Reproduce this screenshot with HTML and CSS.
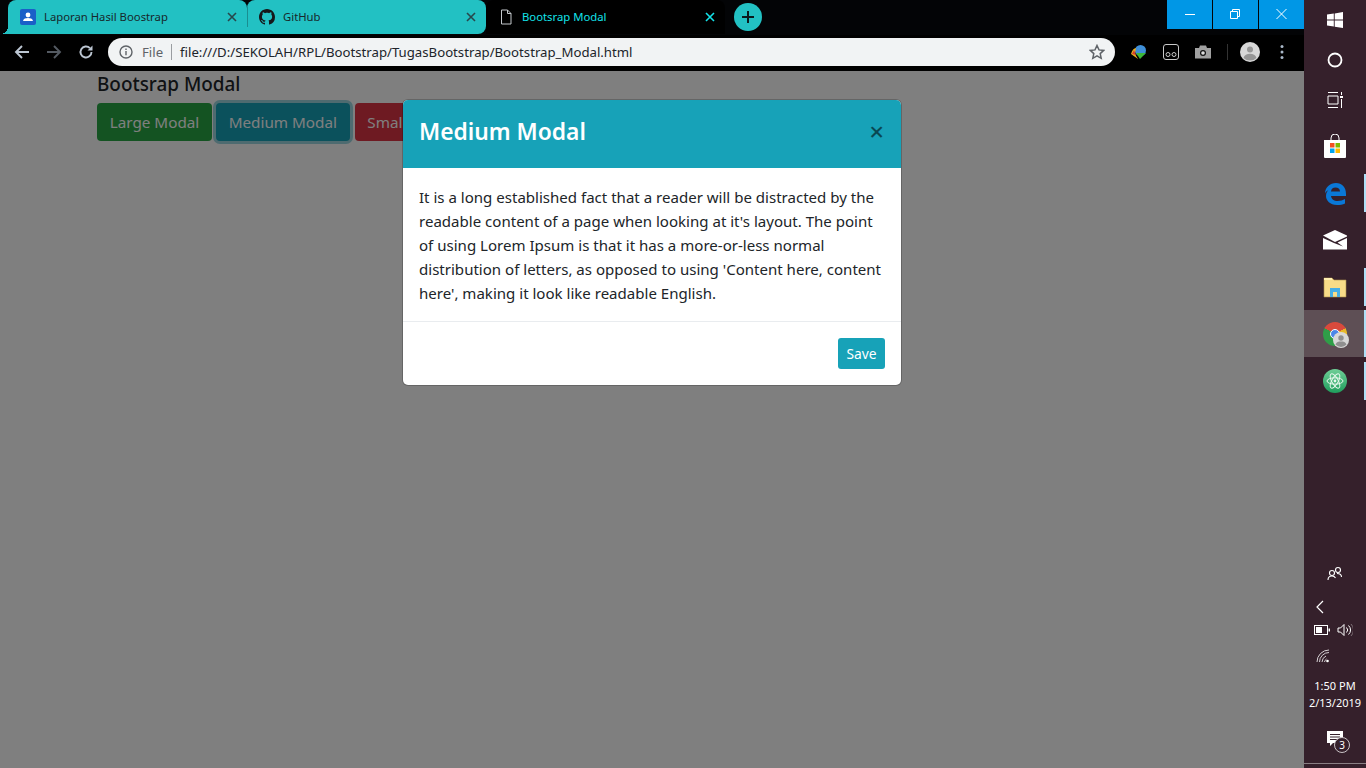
FILE: index.html
```html
<!DOCTYPE html>
<html lang="en">
<head>
  <meta charset="UTF-8">
  <meta name="viewport" content="width=device-width, initial-scale=1.0">
  <title>Bootsrap Modal</title>
  <link rel="stylesheet" href="styles.css">
</head>
<body>
  <div class="browser">
    <div class="tabstrip">
      <div class="tab">
        <svg class="favicon" viewBox="0 0 16 16"><rect width="16" height="16" rx="2" fill="#1a5fc8"/><circle cx="8" cy="6" r="2.4" fill="#fff"/><path d="M3 12c.5-2.4 2.6-3 5-3s4.500.6 5 3z" fill="#fff"/></svg>
        <span class="tab-title">Laporan Hasil Boostrap</span>
        <svg class="tab-close" viewBox="0 0 10 10"><path d="M1 1l8 8M9 1l-8 8"/></svg>
      </div>
      <div class="tab">
        <svg class="favicon" viewBox="0 0 16 16"><path fill="#16181a" d="M8 0C3.58 0 0 3.58 0 8c0 3.54 2.29 6.53 5.47 7.59.4.07.55-.17.55-.38 0-.19-.01-.82-.01-1.49-2.01.37-2.53-.49-2.69-.94-.09-.23-.48-.94-.82-1.13-.28-.15-.68-.52-.01-.53.63-.01 1.08.58 1.23.82.72 1.21 1.87.87 2.33.66.07-.52.28-.87.51-1.07-1.78-.2-3.64-.89-3.64-3.95 0-.87.31-1.59.82-2.15-.08-.2-.36-1.02.08-2.12 0 0 .67-.21 2.2.82.64-.18 1.32-.27 2-.27.68 0 1.36.09 2 .27 1.53-1.04 2.2-.82 2.2-.82.44 1.1.16 1.92.08 2.12.51.56.82 1.27.82 2.15 0 3.07-1.87 3.75-3.65 3.95.29.25.54.73.54 1.48 0 1.07-.01 1.93-.01 2.2 0 .21.15.46.55.38A8.013 8.013 0 0016 8c0-4.420-3.58-8-8-8z"/></svg>
        <span class="tab-title">GitHub</span>
        <svg class="tab-close" viewBox="0 0 10 10"><path d="M1 1l8 8M9 1l-8 8"/></svg>
      </div>
      <div class="tab tab-active">
        <svg class="favicon" viewBox="0 0 16 16"><path d="M3.500 1h6l3.500 3.500V15h-9.500zM9.500 1v3.500H13" fill="none" stroke="#c4c8cc" stroke-width="1"/></svg>
        <span class="tab-title">Bootsrap Modal</span>
        <svg class="tab-close" viewBox="0 0 10 10"><path d="M1 1l8 8M9 1l-8 8"/></svg>
      </div>
      <div class="new-tab">
        <svg viewBox="0 0 14 14"><path d="M7 1v12M1 7h12"/></svg>
      </div>
      <div class="window-controls">
        <div class="win-btn"><svg viewBox="0 0 12 12"><path d="M1 6.500h10"/></svg></div>
        <div class="win-btn"><svg viewBox="0 0 12 12"><path d="M.5 3.500h7v7h-7zM2.500 3.500v-2h7v7h-2"/></svg></div>
        <div class="win-btn"><svg viewBox="0 0 12 12"><path d="M.5 1l10 10M10.500 1l-10 10"/></svg></div>
      </div>
    </div>

    <div class="toolbar">
      <svg class="nav-icon" viewBox="0 0 16 16"><path d="M15 8H2M8 2L2 8l6 6"/></svg>
      <svg class="nav-icon nav-off" viewBox="0 0 16 16"><path d="M1 8h13M8 2l6 6-6 6"/></svg>
      <svg class="nav-icon" viewBox="0 0 16 16"><path d="M13.500 8a5.500 5.500 0 1 1-1.600-3.900"/><path class="nav-fill" d="M14.500 1.500v5h-5z"/></svg>
      <div class="omnibox">
        <svg class="info-icon" viewBox="0 0 14 14"><circle cx="7" cy="7" r="6" fill="none" stroke="#5f6368" stroke-width="1.400"/><path d="M6.300 6h1.400v4.200H6.300zM6.300 3.500h1.400v1.400H6.300z" fill="#5f6368"/></svg>
        <span class="scheme">File</span>
        <span class="url">file:///D:/SEKOLAH/RPL/Bootstrap/TugasBootstrap/Bootstrap_Modal.html</span>
        <svg class="star-icon" viewBox="0 0 16 16"><path d="M8 1.500l2 4.400 4.700.5-3.500 3.200 1 4.700L8 11.900l-4.200 2.400 1-4.700L1.300 6.400 6 5.900z"/></svg>
      </div>
      <div class="extensions">
        <svg class="ext-icon" viewBox="0 0 18 18"><circle cx="10.500" cy="7.500" r="5.500" fill="#3f8fd8"/><path d="M1 11c1-4 3-6 5-6l-1 6 3 5z" fill="#e8b020"/><path d="M2 11l2-4 2 5z" fill="#d8402c"/><path d="M6 10h10l-6 6z" fill="#3db83a"/></svg>
        <svg class="ext-icon" viewBox="0 0 18 18"><rect x="1.500" y="1.500" width="15" height="15" rx="2.500" fill="none" stroke="#c8c8c8"/><circle cx="6" cy="11.500" r="2" fill="none" stroke="#c8c8c8"/><circle cx="12" cy="11.500" r="2" fill="none" stroke="#c8c8c8"/></svg>
        <svg class="ext-icon" viewBox="0 0 18 18"><path d="M1 5h4l1-2.500h6L13 5h4v10.500H1z" fill="#a0a0a0"/><circle cx="9" cy="10" r="3" fill="#111"/><circle cx="9" cy="10" r="1.800" fill="#ddd"/></svg>
        <span class="ext-sep"></span>
        <svg class="avatar" viewBox="0 0 20 20"><circle cx="10" cy="10" r="10" fill="#d8d8d8"/><circle cx="10" cy="7.500" r="3" fill="#969696"/><path d="M3.500 16c.8-3 3.500-4.300 6.500-4.300s5.700 1.300 6.500 4.300a9.500 9.500 0 0 1-13 0z" fill="#969696"/></svg>
        <svg class="menu-dots" viewBox="0 0 4 16"><circle cx="2" cy="2.500" r="1.500"/><circle cx="2" cy="8" r="1.500"/><circle cx="2" cy="13.500" r="1.500"/></svg>
      </div>
    </div>

    <div class="page">
      <h5 class="page-title">Bootsrap Modal</h5>
      <div class="btn-row">
        <button class="btn btn-success">Large Modal</button>
        <button class="btn btn-info btn-focus">Medium Modal</button>
        <button class="btn btn-danger">Small Modal</button>
      </div>
      <div class="backdrop"></div>
      <div class="modal">
        <div class="modal-header">
          <h4 class="modal-title">Medium Modal</h4>
          <span class="modal-close">&times;</span>
        </div>
        <div class="modal-body">It is a long established fact that a reader will be distracted by the readable content of a page when looking at it's layout. The point of using Lorem Ipsum is that it has a more-or-less normal distribution of letters, as opposed to using 'Content here, content here', making it look like readable English.</div>
        <div class="modal-footer">
          <button class="btn-save">Save</button>
        </div>
      </div>
    </div>
  </div>

  <div class="taskbar">
    <div class="task-top">
      <svg class="sys-icon" viewBox="0 0 16 16"><path d="M0 2.500l6.800-1v6H0zM7.700 1.400L16 0v7.500H7.700zM0 8.400h6.800v6.100l-6.800-1zM7.700 8.400H16V16l-8.300-1.300z" fill="#fff"/></svg>
      <svg class="sys-icon" viewBox="0 0 16 16"><circle cx="8" cy="8" r="6.500" fill="none" stroke="#fff" stroke-width="1.800"/></svg>
      <svg class="sys-icon" viewBox="0 0 16 16"><path d="M1 .500h10M1 15.500h10M1 4h10v8H1zM14.500 0v3M14.500 7v9" fill="none" stroke="#fff"/><rect x="13" y="4" width="3" height="2" fill="#fff"/></svg>
    </div>
    <div class="task-apps">
      <div class="task-app">
        <svg class="app-icon" viewBox="0 0 24 24"><path d="M8 6V4a4 4 0 0 1 8 0v2" fill="none" stroke="#fff"/><path d="M1 6h22v17a1 1 0 0 1-1 1H2a1 1 0 0 1-1-1z" fill="#fff"/><rect x="7" y="9" width="4.500" height="4.500" fill="#f25022"/><rect x="12.500" y="9" width="4.500" height="4.500" fill="#7fba00"/><rect x="7" y="14.500" width="4.500" height="4.500" fill="#00a4ef"/><rect x="12.500" y="14.500" width="4.500" height="4.500" fill="#ffb900"/></svg>
      </div>
      <div class="task-app task-open">
        <svg class="app-icon" viewBox="0 0 24 24"><path d="M2 13C2 6 7 2 13 2c6 0 10 4 10 11v2H8c.3 3 3 5 6.500 5 3 0 5.500-.8 7.500-2v4.500c-2.200 1-5 1.500-8 1.500-7 0-11-4.500-11-9 0-3 1.200-5.500 4-7-1.800 1.500-4.500 2-5 5zM8 10.500h9c0-2.500-1.800-4-4.500-4S8.300 8 8 10.500z" fill="#0a78d7"/></svg>
      </div>
      <div class="task-app">
        <svg class="app-icon" viewBox="0 0 24 24"><path d="M0 7.500L12 2l12 5.500v1L12 14z" fill="#fff"/><path d="M0 10v11.500h24V10L14.500 14.500l5.500 4-9-3.500z" fill="#fff"/></svg>
      </div>
      <div class="task-app task-open">
        <svg class="app-icon" viewBox="0 0 24 24"><path d="M1 3h8l2 2h12v17H1z" fill="#f8dc88" stroke="#a88f4c" stroke-width=".6"/><path d="M1 3h8v2H1z" fill="#ffeeb0"/><path d="M7 13h10v9h-3v-5h-4v5H7z" fill="#46aee6"/></svg>
      </div>
      <div class="task-app task-open task-active">
        <div class="chrome-logo">
          <span class="chrome-dot"></span>
          <svg class="chrome-badge" viewBox="0 0 16 16"><circle cx="8" cy="8" r="8" fill="#d8d8d8"/><circle cx="8" cy="6" r="2.700" fill="#8f8f8f"/><path d="M2.500 12.500C3.300 10 5.500 9.500 8 9.500s4.700.5 5.500 3a7.500 7.500 0 0 1-11 0z" fill="#8f8f8f"/></svg>
        </div>
      </div>
      <div class="task-app task-open">
        <svg class="app-icon" viewBox="0 0 24 24"><defs><linearGradient id="atomBg" x1="0" y1="0" x2="0" y2="1"><stop offset="0" stop-color="#6fcf97"/><stop offset="1" stop-color="#1f9d5c"/></linearGradient></defs><circle cx="12" cy="12" r="12" fill="url(#atomBg)"/><g fill="none" stroke="#e8f8ee" stroke-width="1"><ellipse cx="12" cy="12" rx="8" ry="3.200"/><ellipse cx="12" cy="12" rx="8" ry="3.200" transform="rotate(60 12 12)"/><ellipse cx="12" cy="12" rx="8" ry="3.200" transform="rotate(120 12 12)"/></g><circle cx="12" cy="12" r="1.400" fill="#e8f8ee"/></svg>
      </div>
    </div>
    <div class="tray">
      <svg class="tray-people" viewBox="0 0 16 16"><g fill="none" stroke="#fff" stroke-width="1.100"><circle cx="11" cy="4" r="2.500"/><circle cx="5" cy="7" r="2.500"/><path d="M1 14c0-2.500 1.500-4 4-4s3 1 3.500 2M10 7.500c2.500 0 4.500 1 4.500 3.500"/></g></svg>
      <svg class="tray-chevron" viewBox="0 0 10 14"><path d="M8 1L2 7l6 6" fill="none" stroke="#fff" stroke-width="1.200"/></svg>
      <div class="tray-row">
        <svg class="tray-battery" viewBox="0 0 16 10"><rect x=".5" y=".5" width="13" height="9" fill="none" stroke="#fff"/><rect x="2" y="2" width="6" height="6" fill="#fff"/><rect x="14.500" y="3.500" width="1.500" height="3" fill="#fff"/></svg>
        <svg class="tray-volume" viewBox="0 0 16 14"><path d="M1 5h2.500L7 1.500v11L3.500 9H1zM9.500 4.500a3.500 3.500 0 0 1 0 5M11.500 2.500a6 6 0 0 1 0 9" fill="none" stroke="#fff"/><path d="M14 1a8.500 8.500 0 0 1 0 12" fill="none" stroke="#7d6f76"/></svg>
      </div>
      <svg class="tray-wifi" viewBox="0 0 14 14"><g fill="none" stroke="#d5d0d3"><path d="M1 13A12 12 0 0 1 13 1"/><path d="M3.500 13A9.500 9.500 0 0 1 13 3.500"/><path d="M6 13A7 7 0 0 1 10 7"/><path d="M8.500 13A4.500 4.500 0 0 1 10.500 10"/></g><circle cx="11.500" cy="12" r="1.300" fill="#fff"/></svg>
      <div class="clock">
        <div>1:50 PM</div>
        <div>2/13/2019</div>
      </div>
      <div class="notify">
        <svg viewBox="0 0 16 16"><path d="M0 0h16v12H6l-3 3v-3H0z" fill="#fff"/><path d="M3 3.500h10M3 6h10M3 8.500h7" stroke="#35202b" fill="none"/></svg>
        <span class="notify-count">3</span>
      </div>
    </div>
    <div class="task-line"></div>
  </div>
</body>
</html>
```

FILE: styles.css
```css
* {
  box-sizing: border-box;
}
html, body {
  margin: 0;
  height: 100%;
}
body {
  display: flex;
  width: 1366px;
  height: 768px;
  overflow: hidden;
  font-family: "Noto Sans", sans-serif;
  background-color: #fff;
}
svg {
  display: block;
  flex: none;
}

/* ventana del navegador */
.browser {
  width: 1304px;
  display: flex;
  flex-direction: column;
}
.tabstrip {
  height: 35px;
  display: flex;
  align-items: flex-start;
  padding-left: 8px;
  background-color: #030406;
}
.tab {
  width: 239px;
  height: 34px;
  position: relative;
  display: flex;
  align-items: center;
  padding: 0 10px 0 12px;
  background-color: #22c1c3;
  font-size: 11.300px;
  color: #17282b;
  border-radius: 8px 8px 0 0;
}
.tab:first-child::before {
  content: "";
  position: absolute;
  left: -8px;
  bottom: 0;
  width: 8px;
  height: 8px;
  background: radial-gradient(circle at 0 0, transparent 8px, #22c1c3 8px);
}
.tab:nth-child(2) {
  border-radius: 8px 8px 8px 0;
}
.tab:nth-child(2)::before {
  content: "";
  position: absolute;
  left: 0;
  top: 7px;
  width: 1px;
  height: 20px;
  background-color: #1a8e90;
}
.tab-active {
  background-color: #000;
  color: #13e3ea;
}
.favicon {
  width: 16px;
  height: 16px;
  margin-right: 8px;
}
.tab-title {
  flex: 1;
  white-space: nowrap;
  margin-bottom: 2px;
}
.tab-close {
  width: 10px;
  height: 10px;
  fill: none;
  stroke: #28474b;
  stroke-width: 1.600;
}
.tab-active .tab-close {
  stroke: #13e3ea;
}
.new-tab {
  width: 28px;
  height: 28px;
  margin: 3px 0 0 9px;
  border-radius: 50%;
  background-color: #22c1c3;
  display: flex;
  align-items: center;
  justify-content: center;
}
.new-tab svg {
  width: 14px;
  height: 14px;
  fill: none;
  stroke: #0b1a1c;
  stroke-width: 2;
}
.window-controls {
  margin-left: auto;
  display: flex;
  gap: 1px;
}
.win-btn {
  width: 45px;
  height: 29px;
  padding-bottom: 1px;
  background-color: #0097e6;
  display: flex;
  align-items: center;
  justify-content: center;
}
.win-btn svg {
  width: 12px;
  height: 12px;
  fill: none;
  stroke: #fff;
  stroke-width: 1;
}

.toolbar {
  height: 36px;
  display: flex;
  align-items: center;
  padding: 0 0 2px 14px;
  background-color: #000;
}
.nav-icon {
  width: 16px;
  height: 16px;
  margin-right: 16px;
  fill: none;
  stroke: #bcc6d2;
  stroke-width: 1.900;
}
.nav-fill {
  fill: #bcc6d2;
  stroke: none;
}
.nav-off {
  stroke: #545a62;
}
.omnibox {
  width: 1007px;
  height: 28px;
  margin-left: -2px;
  border-radius: 14px;
  background-color: #f1f3f4;
  display: flex;
  align-items: center;
  padding: 0 10px 0 11px;
  font-size: 13.200px;
}
.info-icon {
  width: 14px;
  height: 14px;
  margin-right: 9px;
}
.scheme {
  color: #5f6368;
  padding-right: 8px;
  margin-right: 8px;
  border-right: 1px solid #9a9da1;
  line-height: 16px;
}
.url {
  flex: 1;
  color: #20242a;
  white-space: nowrap;
}
.star-icon {
  width: 16px;
  height: 16px;
  fill: none;
  stroke: #5f6368;
  stroke-width: 1.500;
}
.extensions {
  display: flex;
  align-items: center;
  padding-left: 15px;
}
.ext-icon {
  width: 18px;
  height: 18px;
  margin-right: 14px;
}
.ext-sep {
  width: 1px;
  height: 16px;
  margin: 0 12px 0 1px;
  background-color: #333;
}
.avatar {
  width: 20px;
  height: 20px;
  margin-right: 20px;
}
.menu-dots {
  width: 4px;
  height: 16px;
  fill: #a9b8c8;
}

/* contenido de la pagina */
.page {
  flex: 1;
  position: relative;
  padding: 0 97px;
  color: #212529;
}
.page-title {
  margin: 0;
  height: 32px;
  font-size: 18.900px;
  font-weight: 500;
  line-height: 27px;
}
.btn-row {
  display: flex;
  gap: 4px;
}
.btn {
  height: 38px;
  padding: 0 11.700px;
  border: 1px solid transparent;
  border-radius: 4px;
  color: #fff;
  font-family: inherit;
  font-size: 15.250px;
}
.btn-success {
  background-color: #28a745;
}
.btn-info {
  background-color: #17a2b8;
  margin-right: 1px;
}
.btn-focus {
  box-shadow: 0 0 0 3px rgba(58, 176, 195, .5);
}
.btn-danger {
  background-color: #dc3545;
}
.backdrop {
  position: absolute;
  inset: 0;
  background-color: rgba(0, 0, 0, .5);
}
.modal {
  position: absolute;
  left: 403px;
  top: 29px;
  width: 498px;
  background-color: #fff;
  border-radius: 5px;
  overflow: hidden;
  box-shadow: 0 0 0 1px rgba(0, 0, 0, .2);
}
.modal-header {
  height: 68px;
  display: flex;
  align-items: center;
  justify-content: space-between;
  padding: 0 17px 6px 16px;
  background-color: #17a2b8;
}
.modal-title {
  margin: 0;
  font-size: 22.800px;
  font-weight: 600;
  color: #fff;
}
.modal-close {
  font-size: 26px;
  font-weight: 500;
  line-height: 1;
  color: #000;
  opacity: .55;
}
.modal-body {
  padding: 17px 16px 0;
  height: 153px;
  font-size: 15.060px;
  line-height: 24px;
  color: #212529;
}
.modal-footer {
  border-top: 1px solid #e9ecef;
  height: 64px;
  padding: 16px;
  display: flex;
  justify-content: flex-end;
}
.btn-save {
  height: 31px;
  padding: 0 8.500px;
  border: 0;
  border-radius: 3px;
  background-color: #17a2b8;
  color: #fff;
  font-family: inherit;
  font-size: 13.800px;
}

/* barra de tareas */
.taskbar {
  width: 62px;
  display: flex;
  flex-direction: column;
  background-color: #35202b;
}
.task-top {
  height: 122px;
  display: flex;
  flex-direction: column;
}
.sys-icon {
  width: 16px;
  height: 16px;
  margin: 12px 23px;
}
.task-app {
  height: 47px;
  position: relative;
  display: flex;
  align-items: center;
  justify-content: center;
}
.task-open::after {
  content: "";
  position: absolute;
  right: 0;
  top: 5px;
  width: 2px;
  height: 38px;
  background-color: #aee0f7;
}
.task-active {
  background-color: #5e4f55;
}
.task-active::after {
  top: 0;
  height: 47px;
}
.app-icon {
  width: 24px;
  height: 24px;
}
.chrome-logo {
  width: 24px;
  height: 24px;
  position: relative;
  border-radius: 50%;
  background: conic-gradient(from 300deg, #d84a3c 0 120deg, #e8b829 120deg 240deg, #2f9e48 240deg 360deg);
}
.chrome-dot {
  position: absolute;
  left: 7px;
  top: 7px;
  width: 10px;
  height: 10px;
  border-radius: 50%;
  background-color: #4a86e8;
  border: 1px solid #fff;
}
.chrome-badge {
  position: absolute;
  left: 10px;
  top: 10px;
  width: 16px;
  height: 16px;
}
.tray {
  margin-top: auto;
  display: flex;
  flex-direction: column;
  align-items: center;
  color: #fff;
}
.tray-people {
  width: 16px;
  height: 16px;
}
.tray-chevron {
  width: 10px;
  height: 14px;
  margin: 18px 30px 0 0;
}
.tray-row {
  display: flex;
  align-items: center;
  gap: 7px;
  margin: 9px 4px 1px 0;
}
.tray-battery {
  width: 16px;
  height: 10px;
}
.tray-volume {
  width: 16px;
  height: 14px;
}
.tray-wifi {
  width: 14px;
  height: 14px;
  margin: 11px 24px 0 0;
}
.clock {
  margin-top: 14px;
  text-align: center;
  font-size: 11px;
  line-height: 17px;
  white-space: nowrap;
}
.notify {
  position: relative;
  width: 16px;
  height: 14px;
  margin: 20px 0 18px;
}
.notify-count {
  position: absolute;
  left: 7px;
  top: 6px;
  width: 16px;
  height: 16px;
  border-radius: 50%;
  border: 1px solid #c9c3c6;
  background-color: #35202b;
  font-size: 10px;
  line-height: 14px;
  text-align: center;
}
.task-line {
  height: 1px;
  margin-bottom: 4px;
  background-color: #8a7f84;
}
```
